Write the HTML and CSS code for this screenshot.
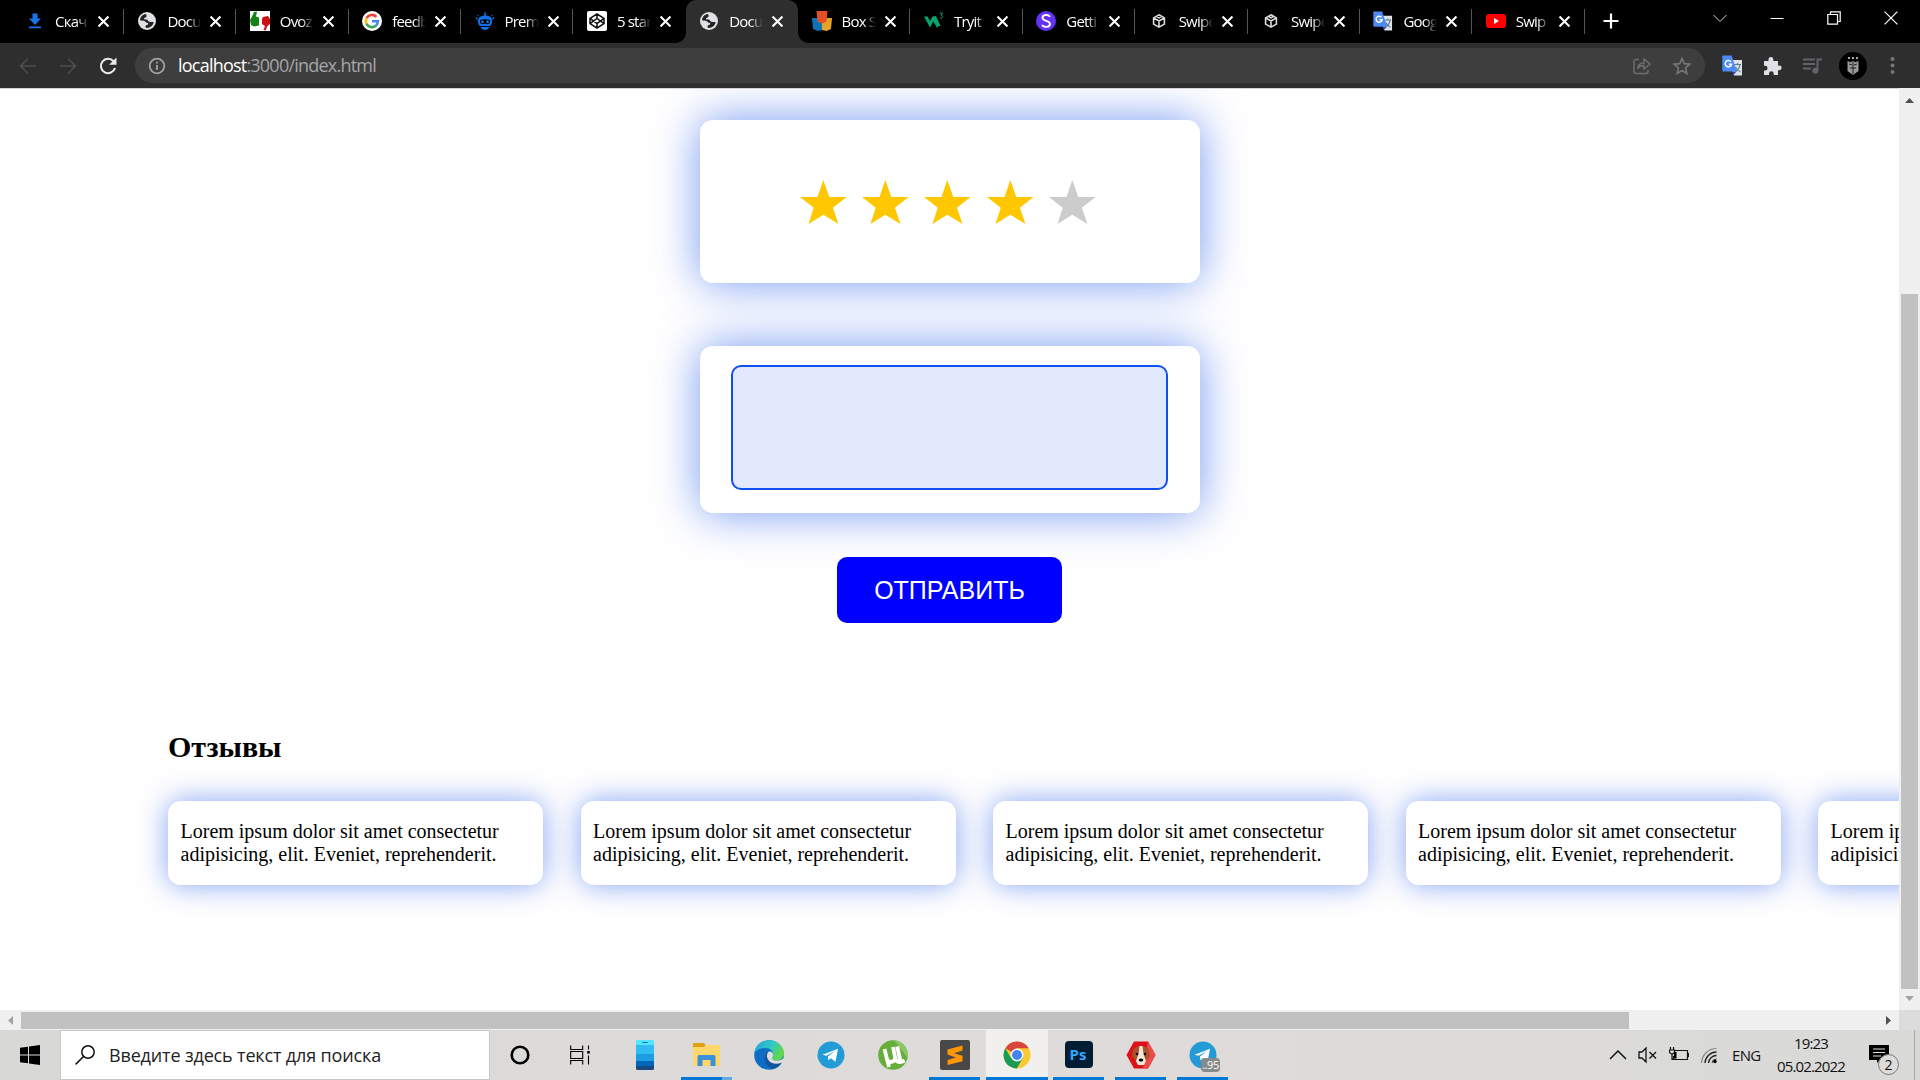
FILE: index.html
```html
<!DOCTYPE html>
<html lang="ru">
<head>
<meta charset="utf-8">
<title>Document</title>
<link rel="stylesheet" href="styles.css">
</head>
<body>
<svg class="defs" aria-hidden="true">
  <symbol id="close" viewBox="0 0 10 10"><path d="M.5.5l9 9M9.500.5l-9 9" stroke="#fff" stroke-width="1.900"/></symbol>
  <symbol id="globe" viewBox="0 0 20 20"><circle cx="10" cy="10" r="9" fill="#dfe1e5"/><path d="M8.800 3.100C5.500 3.500 3.200 6 3 9.300c1.500.7 3 .3 4.500.6 1.300.4 1 1.700 2.300 1.900.9.100 1.500.2 1.400 1.200-.1 1.200-2.700.8-2.700 2.200 0 .9.300 1.300 1 1.800 3.700.1 6.500-2.400 7.200-5.700-1.500-.5-3-.2-4.400-.5-1.600-.4-1.200-1.800-2.600-2.200-1.200-.3-2.600.1-2.700-.9 0-1.300 2.500-.9 2.600-2.400.1-.9-.2-1.600-.8-2.200z" fill="#222"/></symbol>
  <symbol id="box" viewBox="0 0 20 20"><path d="M10 3.800l5.400 3.100v6.200L10 16.200l-5.400-3.100V6.900zM4.600 6.900L10 10l5.400-3.100M10 10v6.200M7.300 5.300l2.700 1.600 2.700-1.600" fill="none" stroke="#ddd" stroke-width="1.600"/></symbol>
  <symbol id="translate" viewBox="0 0 21 21"><path d="M7 5h13v15.500h-8z" fill="#dfe2e6"/><path d="M12 9.500h7M15.500 8v1.500M13 17c3-2 4.500-4 5-7.500M13.500 12c1 2.500 2.500 4 5 5" fill="none" stroke="#607d8b" stroke-width="1.200"/><path d="M10.500 16.500h4L11.500 20z" fill="#3742c4"/><path d="M1 .5h8.500L15 16.500H1.500Q.3 16.500.3 15V1.500Q.3.500 1 .5z" fill="#4c8bf5"/><path d="M9 6.700a3.200 3.200 0 1 0 .6 2.500H6.800" fill="none" stroke="#fff" stroke-width="1.500"/></symbol>
  <symbol id="telegram" viewBox="0 0 28 28"><circle cx="14" cy="14" r="13.500" fill="#229bd6"/><path d="M5.500 13.700L21 7.700l-2.500 13-4.800-3.500-2.300 2.300-.4-4.100 7-5.700-8.500 5z" fill="#fff"/></symbol>
  <symbol id="star" viewBox="0 0 46.600 44"><path d="M23.300 0l6 17h17.300L32.900 27.700 38.500 44 23.300 34.700 8.500 44l5.200-16.300L0 17h17.500z" fill="currentColor"/></symbol>
</svg>

<header class="tabs">
  <div class="tab"><svg class="fav" viewBox="0 0 20 20"><path d="M7.500 2.500h5v5H16l-6 6.500-6-6.500h3.500zM4 15.500h12v1.700H4z" fill="#1a73e8"/></svg><span class="name">Скач</span><svg class="x"><use href="#close"/></svg></div>
  <div class="tab"><svg class="fav"><use href="#globe"/></svg><span class="name">Docu</span><svg class="x"><use href="#close"/></svg></div>
  <div class="tab"><svg class="fav" viewBox="0 0 20 20"><path d="M0 0h20v20H0z" fill="#fff"/><path d="M4 1l3-.5-1 5 3 1v8L4 15.500l-3-1.500-1-5 2-3.500z" fill="#138413"/><path d="M13 6l5-1 2 3v5l-2.500 2-2 4.500-2-.5 1.500-4-3-2V8z" fill="#cc1016"/></svg><span class="name">Ovoz</span><svg class="x"><use href="#close"/></svg></div>
  <div class="tab"><svg class="fav" viewBox="0 0 20 20"><circle cx="10" cy="10" r="10" fill="#fff"/><g fill="none" stroke-width="2.600"><path d="M4.600 7.200A6 6 0 0 1 14.400 5.800" stroke="#ea4335"/><path d="M4.600 7.200a6 6 0 0 0 0 5.600" stroke="#fbbc05"/><path d="M4.600 12.800a6 6 0 0 0 9.200 1.900" stroke="#34a853"/><path d="M13.800 14.700a6 6 0 0 0 2.100-4.400H10" stroke="#4285f4"/></g></svg><span class="name">feedb</span><svg class="x"><use href="#close"/></svg></div>
  <div class="tab"><svg class="fav" viewBox="0 0 20 20"><path d="M3 10Q3 5 9.500 4.600L9 2l1.500-1 .5 3.600Q17 5 17 10t-3 5H6Q3 15 3 10zM.5 6l2 .5V10zM19.500 6l-2 .5V10zM5.500 16h9Q13 19 10 19t-4.500-3zM2 4.500l1-1L4 5zM18 4.500l-1-1L16 5z" fill="#1273eb"/><path d="M5 9q5-1.500 10 0v3q-2 2-5 .5-3 1.500-5-.5z" fill="#000"/><circle cx="7.500" cy="10.800" r="1.400" fill="#1273eb"/><circle cx="12.500" cy="10.800" r="1.400" fill="#1273eb"/></svg><span class="name">Prem</span><svg class="x"><use href="#close"/></svg></div>
  <div class="tab plain"><svg class="fav" viewBox="0 0 20 20"><rect width="20" height="20" rx="2" fill="#fff"/><path d="M10 3l7 4.400v5.200L10 17l-7-4.400V7.400zM10 3v4.500M10 12.500V17M3 7.400l7 5.100 7-5.100M3 12.600l7-5.100 7 5.100" fill="none" stroke="#111" stroke-width="1.500"/></svg><span class="name">5 star</span><svg class="x"><use href="#close"/></svg></div>
  <div class="tab active"><svg class="fav"><use href="#globe"/></svg><span class="name">Docu</span><svg class="x"><use href="#close"/></svg></div>
  <div class="tab"><svg class="fav" viewBox="0 0 20 20"><path d="M0 7h10v12l-4 1-5-2z" fill="#0b73b8"/><path d="M10 7h10l-1 11-4.500 2L10 19z" fill="#e5a228"/><path d="M4.500 0h11l-1 10.500L10 12.500l-4.500-2z" fill="#e44f26"/></svg><span class="name">Box S</span><svg class="x"><use href="#close"/></svg></div>
  <div class="tab"><svg class="fav" viewBox="0 0 20 20"><path d="M0 5.500h3.500L6 10l2.500-4.500L12 5l4.500 10h-2l-1.300 2-4-6.500L6 16.500z" fill="#04a56d"/><path d="M15.800 2.200h2.800l-1.500 2c2 .1 1.800 3-.2 2.900l-1.200-.3" fill="none" stroke="#04a56d"/></svg><span class="name">Tryit</span><svg class="x"><use href="#close"/></svg></div>
  <div class="tab"><svg class="fav" viewBox="0 0 20 20"><circle cx="10" cy="10" r="10" fill="#6431f5"/><path d="M14 5.700C12 3 6.500 3.500 6.500 6.800c0 4 7.500 2.200 7.500 6.200 0 3.300-6 4-8 1" fill="none" stroke="#fff" stroke-width="1.900"/></svg><span class="name">Getti</span><svg class="x"><use href="#close"/></svg></div>
  <div class="tab"><svg class="fav"><use href="#box"/></svg><span class="name">Swipe</span><svg class="x"><use href="#close"/></svg></div>
  <div class="tab"><svg class="fav"><use href="#box"/></svg><span class="name">Swipe</span><svg class="x"><use href="#close"/></svg></div>
  <div class="tab"><svg class="fav"><use href="#translate"/></svg><span class="name">Goog</span><svg class="x"><use href="#close"/></svg></div>
  <div class="tab"><svg class="fav" viewBox="0 0 20 20"><rect y="3" width="20" height="14" rx="3" fill="#f00"/><path d="M8 7l5 3-5 3z" fill="#fff"/></svg><span class="name">Swip</span><svg class="x"><use href="#close"/></svg></div>
  <svg class="newtab" viewBox="0 0 16 16"><path d="M8 .5v15M.5 8h15" stroke="#fff" stroke-width="2.200"/></svg>
  <div class="wincontrols">
    <svg viewBox="0 0 14 14"><path d="M.5 4L7 10.500 13.500 4" fill="none" stroke="#ccc"/></svg>
    <svg viewBox="0 0 14 14"><path d="M.5 7.500h13" stroke="#fff"/></svg>
    <svg viewBox="0 0 14 14"><path d="M.8 3.500h9.700v9.700H.8zM3.500 3.500V.8h9.700v9.700h-2.700" fill="none" stroke="#fff" stroke-width="1.200"/></svg>
    <svg viewBox="0 0 14 14"><path d="M.6.6l12.800 12.800M13.400.6L.6 13.400" stroke="#fff" stroke-width="1.200"/></svg>
  </div>
</header>

<div class="toolbar">
  <div class="nav">
    <svg viewBox="0 0 20 20"><path d="M18 10H3M10 2.500L2.500 10l7.500 7.500" fill="none" stroke="#4c4e50" stroke-width="1.600"/></svg>
    <svg viewBox="0 0 20 20"><path d="M2 10h15M10 2.500l7.500 7.500-7.500 7.500" fill="none" stroke="#4c4e50" stroke-width="1.600"/></svg>
    <svg viewBox="0 0 20 20"><path d="M15.500 5.200A7.200 7.200 0 1 0 17 12" fill="none" stroke="#e8eaed" stroke-width="2.100"/><path d="M18.500 1.500v7.300h-7.300z" fill="#e8eaed"/></svg>
  </div>
  <div class="omnibox">
    <svg class="info" viewBox="0 0 18 18"><circle cx="9" cy="9" r="7.300" fill="none" stroke="#a0a4a9" stroke-width="1.800"/><path d="M9 8v5M9 4.800v1.800" stroke="#a0a4a9" stroke-width="1.800"/></svg>
    <span class="url">localhost<i>:3000/index.html</i></span>
    <svg class="act" viewBox="0 0 20 20"><path d="M7 3.500H4Q2 3.500 2 5.500v10q0 2 2 2h10q2 0 2-2V14M5.500 12.500c.6-4 3-5.500 6.500-5.500V3l6 5-6 5V9.600c-3 0-5 .8-6.500 2.900z" fill="none" stroke="#6c6e70" stroke-width="1.500"/></svg>
    <svg class="act" viewBox="0 0 20 20"><path d="M10 2.500l2.200 5.200 5.600.5-4.200 3.700 1.200 5.500-4.800-2.900-4.800 2.900 1.200-5.500-4.200-3.700 5.600-.5z" fill="none" stroke="#737578" stroke-width="1.700"/></svg>
  </div>
  <div class="extras">
    <svg viewBox="0 0 21 21"><use href="#translate"/></svg>
    <svg viewBox="0 0 21 21"><path d="M2 6h4.500V4.500a2.400 2.400 0 0 1 4.800 0V6H16v4.500h1.300a2.300 2.300 0 0 1 0 4.700H16V20h-4.300v-1.300a2.300 2.300 0 0 0-4.700 0V20H2v-4.500h1.200a2.300 2.300 0 0 0 0-4.700H2z" fill="#dfe1e5"/></svg>
    <svg viewBox="0 0 21 21"><path d="M1 4.500h12M1 9h12M1 13.500h8M20 4.500h-4.500v11" fill="none" stroke="#60646a" stroke-width="2"/><circle cx="13.300" cy="15.700" r="3" fill="#60646a"/></svg>
    <svg class="avatar" viewBox="0 0 28 28"><circle cx="14" cy="14" r="14" fill="#000"/><path d="M9 6h2M13 6h2M17 6h2" stroke="#ddd" stroke-width="1.600"/><path d="M8.500 9l3 1.200L14 9l2.500 1.200 3-1.200v10L14 23l-5.500-4z" fill="#999"/><path d="M10 12l3 1M18 12l-3 1M11 16h6M14 10v12" stroke="#222" stroke-width="1"/></svg>
    <svg viewBox="0 0 21 21"><g fill="#73767a"><circle cx="10.500" cy="4" r="2"/><circle cx="10.500" cy="10.500" r="2"/><circle cx="10.500" cy="17" r="2"/></g></svg>
  </div>
</div>

<div class="viewport">
  <main class="page">
    <section class="card rating">
      <svg class="on"><use href="#star"/></svg>
      <svg class="on"><use href="#star"/></svg>
      <svg class="on"><use href="#star"/></svg>
      <svg class="on"><use href="#star"/></svg>
      <svg><use href="#star"/></svg>
    </section>
    <section class="card message"><textarea class="field" aria-label="Отзыв"></textarea></section>
    <button class="send">ОТПРАВИТЬ</button>
    <h2 class="title">Отзывы</h2>
    <section class="reviews">
      <p class="review">Lorem ipsum dolor sit amet consectetur adipisicing, elit. Eveniet, reprehenderit.</p>
      <p class="review">Lorem ipsum dolor sit amet consectetur adipisicing, elit. Eveniet, reprehenderit.</p>
      <p class="review">Lorem ipsum dolor sit amet consectetur adipisicing, elit. Eveniet, reprehenderit.</p>
      <p class="review">Lorem ipsum dolor sit amet consectetur adipisicing, elit. Eveniet, reprehenderit.</p>
      <p class="review">Lorem ipsum dolor sit amet consectetur adipisicing, elit. Eveniet, reprehenderit.</p>
    </section>
  </main>
  <div class="vbar">
    <svg viewBox="0 0 9 5"><path d="M0 5l4.500-5L9 5z" fill="#505050"/></svg>
    <div class="vthumb"></div>
    <svg viewBox="0 0 9 5"><path d="M0 0l4.500 5L9 0z" fill="#a3a3a3"/></svg>
  </div>
  <div class="hbar">
    <svg viewBox="0 0 5 9"><path d="M5 0L0 4.500 5 9z" fill="#a3a3a3"/></svg>
    <div class="hthumb"></div>
    <svg viewBox="0 0 5 9"><path d="M0 0l5 4.500L0 9z" fill="#505050"/></svg>
  </div>
  <div class="corner"></div>
</div>

<footer class="taskbar">
  <div class="start"><svg viewBox="0 0 20 20"><path d="M0 2.800L8 1.700v7.800H0zM9 1.500L20 0v9.500H9zM0 10.500h8v7.800l-8-1.100zM9 10.500h11V20L9 18.500z"/></svg></div>
  <div class="search">
    <svg viewBox="0 0 20 20"><circle cx="13" cy="7" r="6.200" fill="none" stroke="#111" stroke-width="1.500"/><path d="M8.500 11.500L.6 19.400" stroke="#111" stroke-width="1.500"/></svg>
    <span>Введите здесь текст для поиска</span>
  </div>
  <div class="sys">
    <svg viewBox="0 0 20 20"><circle cx="10" cy="10" r="8.300" fill="none" stroke="#000" stroke-width="2.600"/></svg>
    <svg viewBox="0 0 20 20"><path d="M.7.500v4h12v-4M.7 19.500v-4h12v4M.7 6.500h12v7H.7zM18.500.500v4M18.500 10.500v9" fill="none" stroke="#000" stroke-width="1.100"/><path d="M17.200 6h2.600v2.600h-2.600z"/></svg>
  </div>
  <div class="apps">
    <div class="app"><svg viewBox="0 0 30 30"><path d="M6 1.500Q6 0 7.500 0h15Q24 0 24 1.500V6H6z" fill="#50e6ff"/><path d="M12.500 2.500h5" stroke="#0a62a8"/><path d="M6 5h18v9H6z" fill="#32bdf0"/><path d="M6 14h18v7H6z" fill="#1f9de3"/><path d="M6 21h18v5H6z" fill="#0066b9"/><path d="M6 26h18v2.500q0 1.500-1.500 1.500h-15Q6 30 6 28.500z" fill="#174a80"/></svg></div>
    <div class="app open more"><svg viewBox="0 0 30 30"><path d="M1 4q0-1 1-1h10l1.500 1.500L12 8H1z" fill="#dda112"/><path d="M1 7h11l2-2h14v20q0 1-1 1H2q-1 0-1-1z" fill="#ffd669"/><path d="M5.500 26V16.500q0-1.500 1.500-1.500h15q1.500 0 1.500 1.500V26h-5v-6h-8v6z" fill="#3a8fda"/></svg></div>
    <div class="app"><svg viewBox="0 0 30 30"><defs><linearGradient id="eg" x2="1" y2=".4"><stop stop-color="#23a6dc"/><stop offset=".6" stop-color="#31c8c6"/><stop offset="1" stop-color="#62d84a"/></linearGradient></defs><circle cx="15" cy="15" r="14.800" fill="#0d6cc4"/><path d="M.5 13C1.500 5 7.500.2 15.200.2 23.500.2 30 6.500 30 13c0 5-4 7.500-8 7.500-5 0-5-2.500-3.500-4 1-1.500 1.500-6-4-8C9.500 7 3 8.500.5 13z" fill="url(#eg)"/><path d="M11.500 12c-2.500 6 1 12.500 7 13.500 4 .6 7-.6 9.500-2.300l1.500.5L31 17c-4 4-9 4-11.500 3-1.800-.8-1.800-2.300-.8-3.500 1-1.300.3-4-1.700-5z" fill="#dedcda"/><path d="M12 11.500C8.500 17 11 25 17.500 28.500c4 .5 8-2 10.500-6-5 2.500-11.500 1.500-14-3-1.500-2.500-1.500-5.500.5-8z" fill="#1254a0"/></svg></div>
    <div class="app"><svg class="mid"><use href="#telegram"/></svg></div>
    <div class="app"><svg viewBox="0 0 30 30"><circle cx="15" cy="15" r="14.800" fill="#66ad3b"/><path d="M16 .2A15 15 0 0 1 29.500 18L23 9z" fill="#8ac866"/><path d="M6.500 9l4.500 18M8.600 18.500c2 5.500 8.500 4 8.500-1L15 7M17.200 18c1 4.500 5 5 9.500 2.500M19.200 6.500l3 13.500" fill="none" stroke="#fff" stroke-width="3.800"/></svg></div>
    <div class="app open"><svg viewBox="0 0 30 30"><rect width="30" height="30" rx="2" fill="#484848"/><path d="M22.500 5.500v5L14 13.200l8.500 2.500v5.500L7.500 25v-5l8.500-2.500-8.500-3V9.500z" fill="#ff9800"/></svg></div>
    <div class="app open wide"><svg class="mid" viewBox="0 0 28 28"><circle cx="14" cy="14" r="13.500" fill="#fbc934"/><path d="M14 14L2.300 7.200A13.500 13.500 0 0 1 25.700 7.200H14z" fill="#d9453a"/><path d="M2.300 7.200a13.500 13.500 0 0 0 11.500 20.300L19.800 17 14 14l-5.800 3.200z" fill="#199b57"/><circle cx="14" cy="14" r="6.400" fill="#fff"/><circle cx="14" cy="14" r="5" fill="#4284f3"/></svg></div>
    <div class="app open"><svg viewBox="0 0 30 30"><rect x="1" y="1" width="28" height="27" rx="4" fill="#001d34"/><text class="ps" x="5.500" y="19.500">Ps</text></svg></div>
    <div class="app open"><svg viewBox="0 0 30 30"><path d="M8 1.500h14L29.500 15 22 28.500H8L.5 15z" fill="#dd1118"/><path d="M22 1.500L29.500 15 22 28.500h-5z" fill="#ef4a4a"/><path d="M7 10q3-4 8-4t8 4l1 7-3 2-2 5q-4 3-8 0l-2-5-3-2z" fill="#a85427"/><path d="M13.500 6h3l1 8 2.500 7-2 4h-6l-2-4 2.500-7z" fill="#f3e6d8"/><circle cx="11" cy="14" r="1.200"/><circle cx="19" cy="14" r="1.200"/><ellipse cx="15" cy="20" rx="2.300" ry="1.600"/></svg></div>
    <div class="app open"><svg class="mid"><use href="#telegram"/></svg><span class="count">..95</span></div>
  </div>
  <div class="tray">
    <svg viewBox="0 0 18 18"><path d="M1 13l8-8 8 8" fill="none" stroke="#111" stroke-width="1.500"/></svg>
    <svg viewBox="0 0 20 18"><path d="M1 6h3l4-4v14l-4-4H1zM11.500 6l6.500 6.500M18 6l-6.500 6.500" fill="none" stroke="#111" stroke-width="1.300"/></svg>
    <svg viewBox="0 0 20 18"><path d="M6 4.500h12.500v9H4.500V10M1.500 1v3M4.500 1v3M.5 4h5v2.500l-2.500 2-2.500-2zM3 8v5.500h2M19.500 7v4" fill="none" stroke="#111" stroke-width="1.200"/><path d="M5 6h2.500v6.500H5z"/></svg>
    <svg viewBox="0 0 18 18"><path d="M1.500 17A15 15 0 0 1 16.500 2.500" fill="none" stroke="#888" stroke-width="1.200"/><path d="M5 17A11.500 11.500 0 0 1 16.500 6M8.500 17a8 8 0 0 1 8-7.500" fill="none" stroke="#222" stroke-width="1.300"/><path d="M12 17q.5-4 4.500-4" fill="none" stroke="#222"/><circle cx="15" cy="15.500" r="1.700"/></svg>
    <span class="lang">ENG</span>
    <div class="clock"><span>19:23</span><span>05.02.2022</span></div>
    <div class="notes"><svg viewBox="0 0 20 18"><path d="M0 0h20v15H11l-3 3v-3H0z"/><path d="M4 4h12M4 7.500h12M4 11h8" stroke="#ddd"/></svg><span class="badge">2</span></div>
    <div class="peek"></div>
  </div>
</footer>
</body>
</html>
```
FILE: styles.css
```css
* { box-sizing: border-box; }
body {
  margin: 0;
  width: 1920px;
  height: 1080px;
  overflow: hidden;
  display: flex;
  flex-direction: column;
  background: #fff;
  font-family: "Open Sans", "Noto Sans", sans-serif;
}
svg { display: block; flex: none; }
.defs { position: absolute; width: 0; height: 0; }

/* tab strip */
.tabs { height: 43px; flex: none; display: flex; background: #000; padding-left: 11.600px; }
.tab {
  width: 112.370px;
  flex: none;
  display: flex;
  align-items: center;
  padding: 0 0 1px 13.500px;
  color: #fff;
  font-size: 15px;
  background: linear-gradient(#555, #555) right 9px / 1px 25px no-repeat;
}
.tab.plain { background: none; }
.tab.active {
  position: relative;
  background: #2e2e2e;
  border-radius: 10px 10px 0 0;
}
.tab.active::before, .tab.active::after {
  content: "";
  position: absolute;
  bottom: 0;
  width: 10px;
  height: 10px;
}
.tab.active::before { left: -10px; background: radial-gradient(circle at 0 0, #000 9.500px, #2e2e2e 10px); }
.tab.active::after { right: -10px; background: radial-gradient(circle at 100% 0, #000 9.500px, #2e2e2e 10px); }
.fav { width: 20px; height: 20px; }
.name {
  width: 34px;
  margin: -1px 9px 0 10px;
  overflow: hidden;
  white-space: nowrap;
  letter-spacing: -.8px;
  line-height: 22px;
  -webkit-mask-image: linear-gradient(90deg, #000 62%, transparent);
  mask-image: linear-gradient(90deg, #000 62%, transparent);
}
.x { width: 11px; height: 11px; margin-top: 1px; }
.newtab { width: 16px; height: 16px; margin: 13px 0 0 18.500px; }
.wincontrols { margin-left: auto; display: flex; gap: 43px; padding: 11px 22px 0 0; }
.wincontrols svg { width: 14px; height: 14px; }

/* address row */
.toolbar { height: 45px; flex: none; display: flex; align-items: center; background: #2e2e2e; }
.nav { display: flex; gap: 20px; padding-left: 18px; width: 135px; }
.nav svg { width: 20px; height: 20px; }
.omnibox {
  width: 1570px;
  flex: none;
  height: 35px;
  display: flex;
  align-items: center;
  border-radius: 18px;
  background: #3e3e3e;
  padding: 0 13px 0 13px;
}
.info { width: 18px; height: 18px; }
.url { flex: 1; margin-top: -2px; padding-left: 12px; font-size: 18px; letter-spacing: -.78px; color: #fff; line-height: 24px; }
.url i { font-style: normal; color: #a3a5a8; }
.act { width: 20px; height: 20px; margin-left: 20px; }
.extras { display: flex; align-items: center; padding-left: 17px; }
.extras svg { width: 21px; height: 21px; margin-right: 19px; }
.extras .avatar { width: 28px; height: 28px; margin: 0 15px 0 -3px; }
.extras svg:last-child { margin-right: 0; }

/* browser viewport with its two scrollbars */
.viewport {
  flex: none;
  height: 942px;
  display: grid;
  grid-template: 922px 20px / 1899px 21px;
}
.page {
  overflow: hidden;
  border-top: 1px solid #d5d5d5;
  padding: 31px 0 0;
  display: flex;
  flex-direction: column;
  align-items: center;
  font-family: "Liberation Serif", "Times New Roman", serif;
  font-size: 20px;
}
.card {
  width: 500px;
  flex: none;
  border-radius: 12.500px;
  background: #fff;
  box-shadow: 0 0 46px rgba(10, 72, 232, .57);
}
.rating {
  height: 163px;
  margin-bottom: 63px;
  display: flex;
  gap: 15.900px;
  padding: 60px 0 0 100px;
  color: #ccc;
}
.rating svg { width: 46.600px; height: 44px; }
.rating .on { color: #ffc700; }
.message { height: 167px; padding: 19px 31px; }
.field {
  display: block;
  width: 437px;
  height: 125px;
  resize: none;
  border: 2px solid #124ff0;
  border-radius: 10px;
  background: #e3e9fc;
}
.send {
  width: 225px;
  height: 66px;
  flex: none;
  margin-top: 44px;
  border: 0;
  padding: 0;
  border-radius: 10px;
  background: #00f;
  color: #fff;
  font: 25px "Liberation Sans", Arial, sans-serif;
}
.title { align-self: flex-start; margin: 107px 0 0 168px; font-size: 30px; line-height: 34px; }
.reviews { align-self: flex-start; display: flex; gap: 37.500px; margin: 37px 0 0 168px; }
.review {
  width: 375px;
  height: 84px;
  flex: none;
  margin: 0;
  padding: 19px 12.500px;
  line-height: 23px;
  border-radius: 12.500px;
  background: #fff;
  box-shadow: 0 0 29px rgba(10, 72, 232, .5);
}
.vbar { background: #f0f0f0; display: flex; flex-direction: column; align-items: center; }
.vbar svg { width: 9px; height: 5px; }
.vbar svg:first-child { margin-top: 10px; }
.vthumb { width: 17px; height: 695px; margin: 191px 0 7px; background: #c1c1c1; }
.hbar { background: #f0f0f0; display: flex; align-items: center; }
.hbar svg { width: 5px; height: 9px; }
.hbar svg:first-child { margin-left: 8px; }
.hbar svg:last-child { margin-left: 257px; }
.hthumb { width: 1608px; height: 17px; margin-left: 8px; background: #c1c1c1; }
.corner { background: #dcdcdc; }

/* taskbar */
.taskbar {
  height: 50px;
  flex: none;
  display: flex;
  background: linear-gradient(90deg, #d8d8d7, #dcdbd9 30%, #dfdbd9 55%, #dcdbda 80%, #d9d9d8);
}
.start { width: 60px; padding: 15px 0 0 20px; }
.start svg { width: 20px; height: 20px; }
.search {
  width: 430px;
  height: 50px;
  display: flex;
  align-items: center;
  gap: 14px;
  padding: 0 0 1px 14px;
  background: #fff;
  border: 1px solid #c8c8c8;
  font-size: 18px;
  letter-spacing: -.15px;
  color: #222;
  white-space: nowrap;
}
.search svg { width: 20px; height: 20px; }
.sys { width: 124px; display: flex; align-items: center; gap: 40px; padding-left: 20px; }
.sys svg { width: 20px; height: 20px; }
.apps { display: flex; }
.app {
  position: relative;
  width: 62px;
  display: flex;
  justify-content: center;
  padding-top: 10px;
}
.app svg { width: 30px; height: 30px; }
.app .mid { width: 28px; height: 28px; margin-top: 1px; }
.app.open { background: linear-gradient(#0078d7, #0078d7) 5px 100% / 51px 3px no-repeat; }
.app.more { background: linear-gradient(90deg, #0078d7 41px, #66a9e0 41px) 5px 100% / 51px 3px no-repeat; }
.app.wide { background: linear-gradient(#0078d7, #0078d7) 0 100% / 62px 3px no-repeat, #f2f0ef; }
.ps { font: bold 15px "Open Sans", sans-serif; fill: #31a8ff; }
.count {
  position: absolute;
  left: 29px;
  top: 28px;
  width: 19px;
  height: 14px;
  border-radius: 4px;
  background: #878a8a;
  color: #fff;
  font-size: 11px;
  line-height: 14px;
  letter-spacing: -.5px;
  text-align: center;
}
.tray { margin-left: auto; display: flex; align-items: center; font-size: 15px; color: #111; }
.tray > svg { width: 18px; height: 18px; margin-right: 11px; }
.tray > svg:nth-child(2), .tray > svg:nth-child(3) { width: 20px; }
.tray > svg:nth-child(4) { margin-right: 14px; }
.lang { width: 28px; letter-spacing: -.7px; }
.clock { width: 74px; margin: -1px 1px 0 14px; display: flex; flex-direction: column; align-items: center; line-height: 23px; letter-spacing: -.85px; }
.notes { position: relative; width: 20px; height: 18px; margin: -2px 25px 0 20px; }
.notes svg { width: 20px; height: 18px; }
.badge {
  position: absolute;
  left: 9px;
  top: 9px;
  width: 21px;
  height: 21px;
  border: 1px solid #777;
  border-radius: 50%;
  background: #dcdcdb;
  font-size: 14px;
  line-height: 19px;
  text-align: center;
}
.peek { width: 6px; height: 50px; border-left: 1px solid #aaa; }
```
